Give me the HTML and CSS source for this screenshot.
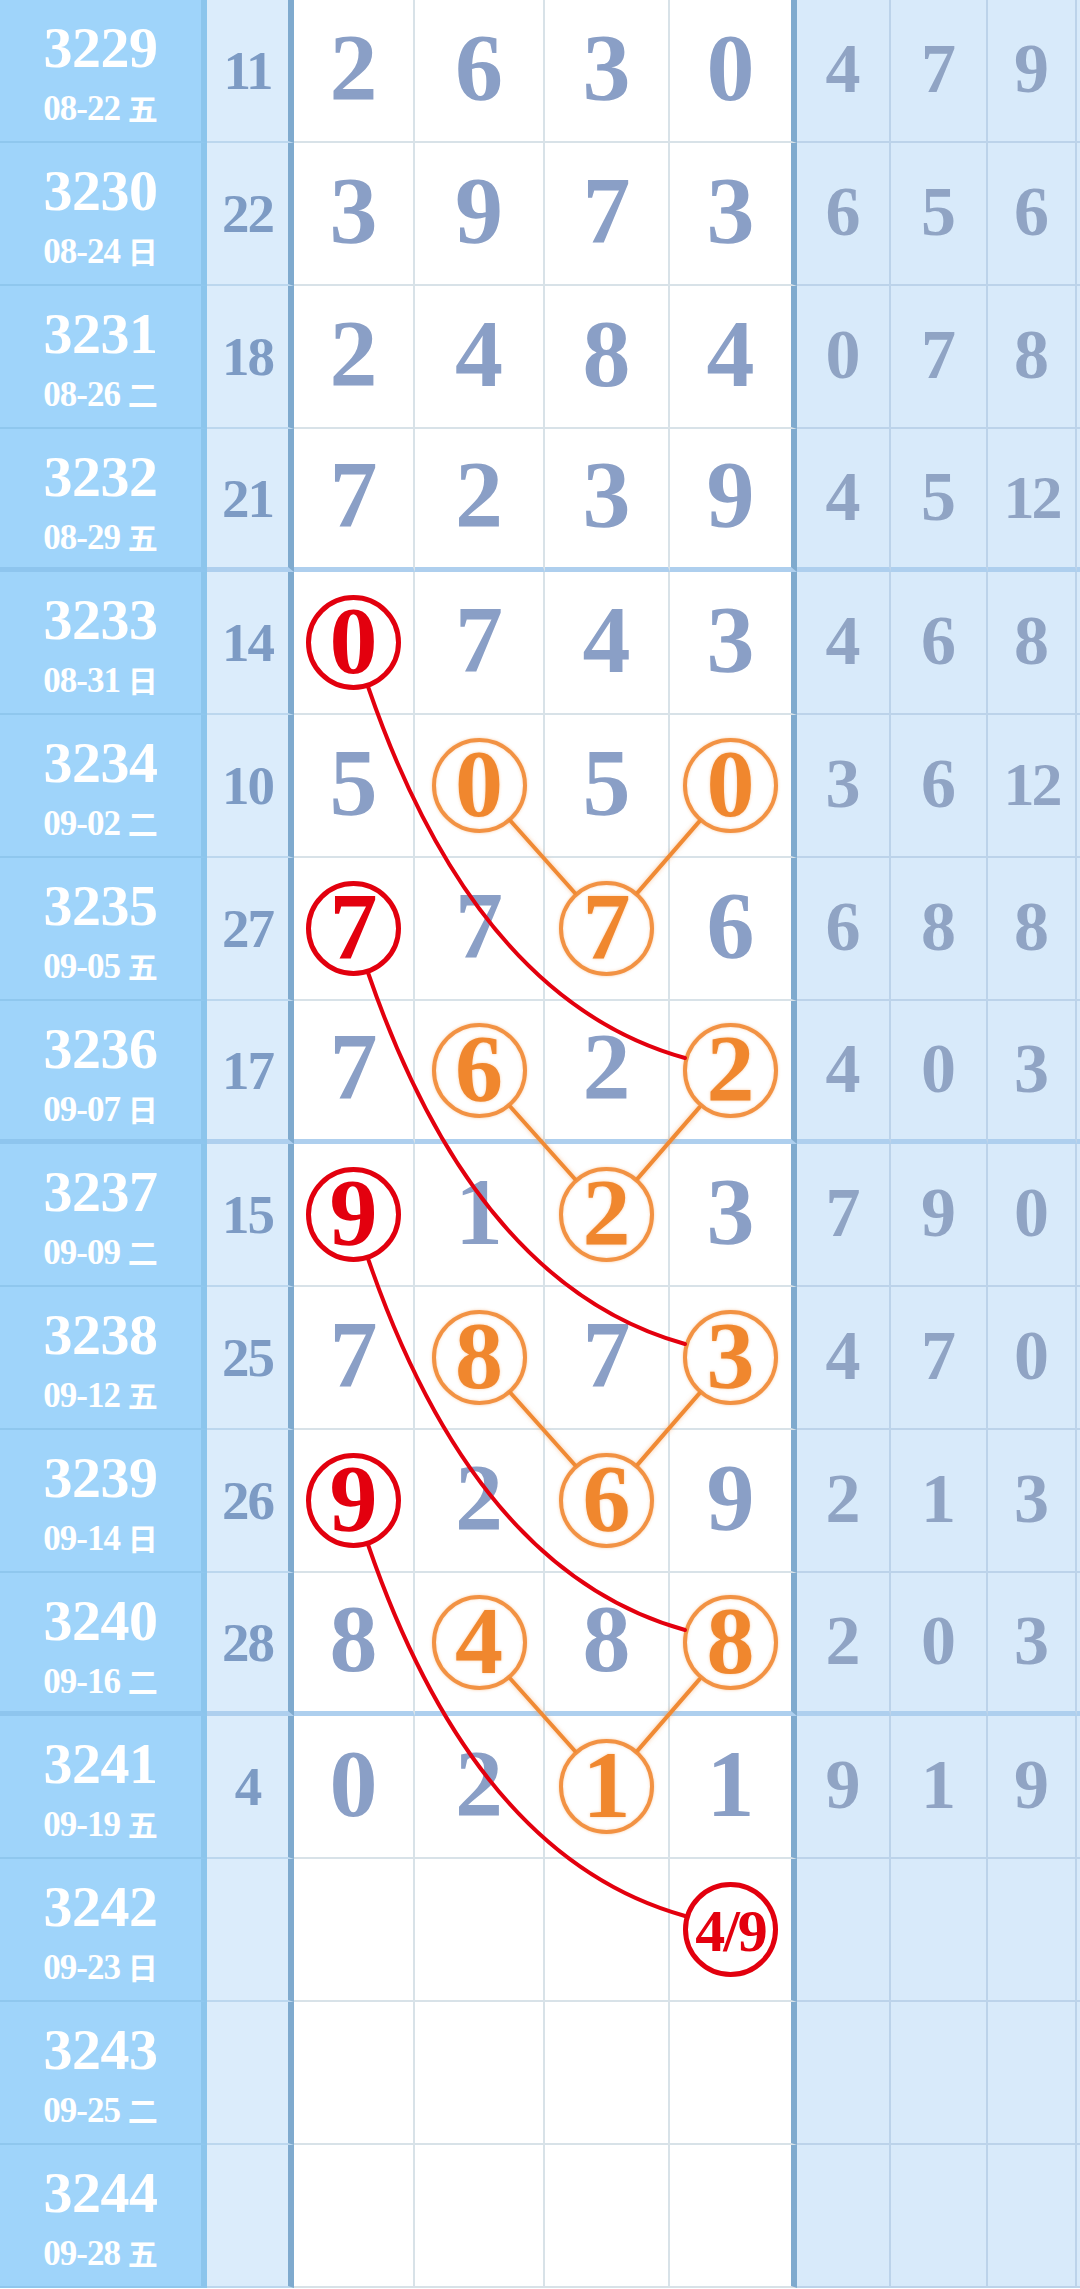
FILE: index.html
```html
<!DOCTYPE html>
<html lang="zh">
<head>
<meta charset="utf-8">
<title>走势图</title>
<link rel="stylesheet" href="styles.css">
</head>
<body>
<div class="board">
  <div class="row">
    <div class="cell id"><span class="no">3229</span><span class="date">08-22 <b>五</b></span></div>
    <div class="cell sum"><span>11</span></div>
    <div class="cell d"><span class="n">2</span></div>
    <div class="cell d"><span class="n">6</span></div>
    <div class="cell d"><span class="n">3</span></div>
    <div class="cell d last"><span class="n">0</span></div>
    <div class="cell r"><span class="m">4</span></div>
    <div class="cell r"><span class="m">7</span></div>
    <div class="cell r"><span class="m">9</span></div>
    <div class="cell edge"></div>
  </div>
  <div class="row">
    <div class="cell id"><span class="no">3230</span><span class="date">08-24 <b>日</b></span></div>
    <div class="cell sum"><span>22</span></div>
    <div class="cell d"><span class="n">3</span></div>
    <div class="cell d"><span class="n">9</span></div>
    <div class="cell d"><span class="n">7</span></div>
    <div class="cell d last"><span class="n">3</span></div>
    <div class="cell r"><span class="m">6</span></div>
    <div class="cell r"><span class="m">5</span></div>
    <div class="cell r"><span class="m">6</span></div>
    <div class="cell edge"></div>
  </div>
  <div class="row">
    <div class="cell id"><span class="no">3231</span><span class="date">08-26 <b>二</b></span></div>
    <div class="cell sum"><span>18</span></div>
    <div class="cell d"><span class="n">2</span></div>
    <div class="cell d"><span class="n">4</span></div>
    <div class="cell d"><span class="n">8</span></div>
    <div class="cell d last"><span class="n">4</span></div>
    <div class="cell r"><span class="m">0</span></div>
    <div class="cell r"><span class="m">7</span></div>
    <div class="cell r"><span class="m">8</span></div>
    <div class="cell edge"></div>
  </div>
  <div class="row sep">
    <div class="cell id"><span class="no">3232</span><span class="date">08-29 <b>五</b></span></div>
    <div class="cell sum"><span>21</span></div>
    <div class="cell d"><span class="n">7</span></div>
    <div class="cell d"><span class="n">2</span></div>
    <div class="cell d"><span class="n">3</span></div>
    <div class="cell d last"><span class="n">9</span></div>
    <div class="cell r"><span class="m">4</span></div>
    <div class="cell r"><span class="m">5</span></div>
    <div class="cell r"><span class="m two">12</span></div>
    <div class="cell edge"></div>
  </div>
  <div class="row">
    <div class="cell id"><span class="no">3233</span><span class="date">08-31 <b>日</b></span></div>
    <div class="cell sum"><span>14</span></div>
    <div class="cell d"><span class="ball red"><span>0</span></span></div>
    <div class="cell d"><span class="n">7</span></div>
    <div class="cell d"><span class="n">4</span></div>
    <div class="cell d last"><span class="n">3</span></div>
    <div class="cell r"><span class="m">4</span></div>
    <div class="cell r"><span class="m">6</span></div>
    <div class="cell r"><span class="m">8</span></div>
    <div class="cell edge"></div>
  </div>
  <div class="row">
    <div class="cell id"><span class="no">3234</span><span class="date">09-02 <b>二</b></span></div>
    <div class="cell sum"><span>10</span></div>
    <div class="cell d"><span class="n">5</span></div>
    <div class="cell d"><span class="ball orange"><span>0</span></span></div>
    <div class="cell d"><span class="n">5</span></div>
    <div class="cell d last"><span class="ball orange"><span>0</span></span></div>
    <div class="cell r"><span class="m">3</span></div>
    <div class="cell r"><span class="m">6</span></div>
    <div class="cell r"><span class="m two">12</span></div>
    <div class="cell edge"></div>
  </div>
  <div class="row">
    <div class="cell id"><span class="no">3235</span><span class="date">09-05 <b>五</b></span></div>
    <div class="cell sum"><span>27</span></div>
    <div class="cell d"><span class="ball red"><span>7</span></span></div>
    <div class="cell d"><span class="n">7</span></div>
    <div class="cell d"><span class="ball orange"><span>7</span></span></div>
    <div class="cell d last"><span class="n">6</span></div>
    <div class="cell r"><span class="m">6</span></div>
    <div class="cell r"><span class="m">8</span></div>
    <div class="cell r"><span class="m">8</span></div>
    <div class="cell edge"></div>
  </div>
  <div class="row sep">
    <div class="cell id"><span class="no">3236</span><span class="date">09-07 <b>日</b></span></div>
    <div class="cell sum"><span>17</span></div>
    <div class="cell d"><span class="n">7</span></div>
    <div class="cell d"><span class="ball orange"><span>6</span></span></div>
    <div class="cell d"><span class="n">2</span></div>
    <div class="cell d last"><span class="ball orange"><span>2</span></span></div>
    <div class="cell r"><span class="m">4</span></div>
    <div class="cell r"><span class="m">0</span></div>
    <div class="cell r"><span class="m">3</span></div>
    <div class="cell edge"></div>
  </div>
  <div class="row">
    <div class="cell id"><span class="no">3237</span><span class="date">09-09 <b>二</b></span></div>
    <div class="cell sum"><span>15</span></div>
    <div class="cell d"><span class="ball red"><span>9</span></span></div>
    <div class="cell d"><span class="n">1</span></div>
    <div class="cell d"><span class="ball orange"><span>2</span></span></div>
    <div class="cell d last"><span class="n">3</span></div>
    <div class="cell r"><span class="m">7</span></div>
    <div class="cell r"><span class="m">9</span></div>
    <div class="cell r"><span class="m">0</span></div>
    <div class="cell edge"></div>
  </div>
  <div class="row">
    <div class="cell id"><span class="no">3238</span><span class="date">09-12 <b>五</b></span></div>
    <div class="cell sum"><span>25</span></div>
    <div class="cell d"><span class="n">7</span></div>
    <div class="cell d"><span class="ball orange"><span>8</span></span></div>
    <div class="cell d"><span class="n">7</span></div>
    <div class="cell d last"><span class="ball orange"><span>3</span></span></div>
    <div class="cell r"><span class="m">4</span></div>
    <div class="cell r"><span class="m">7</span></div>
    <div class="cell r"><span class="m">0</span></div>
    <div class="cell edge"></div>
  </div>
  <div class="row">
    <div class="cell id"><span class="no">3239</span><span class="date">09-14 <b>日</b></span></div>
    <div class="cell sum"><span>26</span></div>
    <div class="cell d"><span class="ball red"><span>9</span></span></div>
    <div class="cell d"><span class="n">2</span></div>
    <div class="cell d"><span class="ball orange"><span>6</span></span></div>
    <div class="cell d last"><span class="n">9</span></div>
    <div class="cell r"><span class="m">2</span></div>
    <div class="cell r"><span class="m">1</span></div>
    <div class="cell r"><span class="m">3</span></div>
    <div class="cell edge"></div>
  </div>
  <div class="row sep">
    <div class="cell id"><span class="no">3240</span><span class="date">09-16 <b>二</b></span></div>
    <div class="cell sum"><span>28</span></div>
    <div class="cell d"><span class="n">8</span></div>
    <div class="cell d"><span class="ball orange"><span>4</span></span></div>
    <div class="cell d"><span class="n">8</span></div>
    <div class="cell d last"><span class="ball orange"><span>8</span></span></div>
    <div class="cell r"><span class="m">2</span></div>
    <div class="cell r"><span class="m">0</span></div>
    <div class="cell r"><span class="m">3</span></div>
    <div class="cell edge"></div>
  </div>
  <div class="row">
    <div class="cell id"><span class="no">3241</span><span class="date">09-19 <b>五</b></span></div>
    <div class="cell sum"><span>4</span></div>
    <div class="cell d"><span class="n">0</span></div>
    <div class="cell d"><span class="n">2</span></div>
    <div class="cell d"><span class="ball orange"><span>1</span></span></div>
    <div class="cell d last"><span class="n">1</span></div>
    <div class="cell r"><span class="m">9</span></div>
    <div class="cell r"><span class="m">1</span></div>
    <div class="cell r"><span class="m">9</span></div>
    <div class="cell edge"></div>
  </div>
  <div class="row">
    <div class="cell id"><span class="no">3242</span><span class="date">09-23 <b>日</b></span></div>
    <div class="cell sum"></div>
    <div class="cell d"></div>
    <div class="cell d"></div>
    <div class="cell d"></div>
    <div class="cell d last"><span class="ball red"><span class="frac">4/9</span></span></div>
    <div class="cell r"></div>
    <div class="cell r"></div>
    <div class="cell r"></div>
    <div class="cell edge"></div>
  </div>
  <div class="row">
    <div class="cell id"><span class="no">3243</span><span class="date">09-25 <b>二</b></span></div>
    <div class="cell sum"></div>
    <div class="cell d"></div>
    <div class="cell d"></div>
    <div class="cell d"></div>
    <div class="cell d last"></div>
    <div class="cell r"></div>
    <div class="cell r"></div>
    <div class="cell r"></div>
    <div class="cell edge"></div>
  </div>
  <div class="row">
    <div class="cell id"><span class="no">3244</span><span class="date">09-28 <b>五</b></span></div>
    <div class="cell sum"></div>
    <div class="cell d"></div>
    <div class="cell d"></div>
    <div class="cell d"></div>
    <div class="cell d last"></div>
    <div class="cell r"></div>
    <div class="cell r"></div>
    <div class="cell r"></div>
    <div class="cell edge"></div>
  </div>

  <svg class="links" width="1080" height="2288" viewBox="0 0 1080 2288" aria-hidden="true">
    <g class="red-links" fill="none" stroke="#e3000e" stroke-width="4" stroke-linecap="round">
      <path d="M368.5 688 Q476 1000 685 1058"/>
      <path d="M368.5 688 Q476 1000 685 1058" transform="translate(0 286)"/>
      <path d="M368.5 688 Q476 1000 685 1058" transform="translate(0 572)"/>
      <path d="M368.5 688 Q476 1000 685 1058" transform="translate(0 858)"/>
    </g>
    <g class="orange-links" stroke="#f08a34" stroke-width="4" stroke-linecap="round">
      <g>
        <line x1="510.6" y1="821" x2="574.9" y2="893"/>
        <line x1="699.4" y1="821.4" x2="637.6" y2="892.6"/>
      </g>
      <g transform="translate(0 286)">
        <line x1="510.6" y1="821" x2="574.9" y2="893"/>
        <line x1="699.4" y1="821.4" x2="637.6" y2="892.6"/>
      </g>
      <g transform="translate(0 572)">
        <line x1="510.6" y1="821" x2="574.9" y2="893"/>
        <line x1="699.4" y1="821.4" x2="637.6" y2="892.6"/>
      </g>
      <g transform="translate(0 858)">
        <line x1="510.6" y1="821" x2="574.9" y2="893"/>
        <line x1="699.4" y1="821.4" x2="637.6" y2="892.6"/>
      </g>
    </g>
  </svg>
</div>
</body>
</html>
```

FILE: styles.css
```css
html, body {
  margin: 0;
  padding: 0;
  background: #ffffff;
}

body {
  width: 1080px;
  height: 2289px;
  overflow: hidden;
  font-family: "Liberation Serif", "Noto Sans CJK SC", serif;
  font-weight: bold;
}

.board {
  position: relative;
  width: 1080px;
}

.row {
  display: grid;
  grid-template-columns: 207px 87px 121px 130px 125px 127px 94px 97px 89px 3px;
  height: 143px;
}

.cell {
  box-sizing: border-box;
  border-bottom: 2px solid transparent;
  display: flex;
  align-items: center;
  justify-content: center;
  min-width: 0;
}

.id {
  background: #9fd4fa;
  border-right: 6px solid #8cc5ec;
  border-bottom-color: #8fc7ee;
  flex-direction: column;
  justify-content: flex-start;
  padding-top: 20px;
  color: #ffffff;
}

.id .no {
  font-size: 58px;
  line-height: 56px;
  letter-spacing: -0.5px;
}

.id .date {
  margin-top: 14px;
  font-size: 35px;
  line-height: 34px;
  letter-spacing: -1px;
  white-space: nowrap;
}

.id .date b {
  font-family: "Noto Sans CJK SC", sans-serif;
  font-weight: bold;
  font-size: 30px;
  letter-spacing: 0;
}

.sum {
  background: #dbecfb;
  border-right: 6px solid #7faace;
  border-bottom-color: #bcd7ee;
  color: #7d9bc4;
  font-size: 55px;
  line-height: 1;
  letter-spacing: -2px;
}

.d {
  background: #ffffff;
  border-right: 2px solid #d8e2e8;
  border-bottom-color: #d8e2e8;
}

.d.last {
  border-right: 6px solid #7faace;
}

.n {
  font-size: 96px;
  line-height: 1;
  color: #8a9fc6;
  margin-bottom: 6px;
}

.r {
  background: #d8eafa;
  border-right: 2px solid #bcd3ea;
  border-bottom-color: #bcd3ea;
}

.m {
  font-size: 70px;
  line-height: 1;
  color: #90a4c4;
  margin-bottom: 3px;
}

.m.two {
  font-size: 62px;
  letter-spacing: -3px;
}

.edge {
  background: #d8eafa;
  border-bottom-color: #bcd3ea;
}

.row.sep .cell {
  border-bottom-width: 5px;
  border-bottom-color: #aecfee;
}

.row.sep .id {
  border-bottom-color: #8ec5ee;
}

.ball {
  box-sizing: border-box;
  width: 95px;
  height: 95px;
  flex: none;
  border-radius: 50%;
  border: 4px solid;
  background: #ffffff;
  display: flex;
  align-items: center;
  justify-content: center;
  padding-bottom: 3px;
  font-size: 96px;
  line-height: 1;
}

.ball.orange {
  border-color: #f29243;
  color: #f0872e;
  box-shadow: 0 0 3px rgba(242, 146, 67, 0.45), inset 0 0 3px rgba(242, 146, 67, 0.35);
  text-shadow: 0 0 3px rgba(242, 146, 67, 0.45);
}

.ball.red {
  border-color: #e2000e;
  border-width: 5px;
  color: #e3000e;
}

.ball .frac {
  font-size: 60px;
  letter-spacing: -2px;
  margin-top: 5px;
}

.links {
  position: absolute;
  left: 0;
  top: 0;
  pointer-events: none;
}

.orange-links {
  filter: drop-shadow(0 0 2px rgba(242, 146, 67, 0.5));
}
```
